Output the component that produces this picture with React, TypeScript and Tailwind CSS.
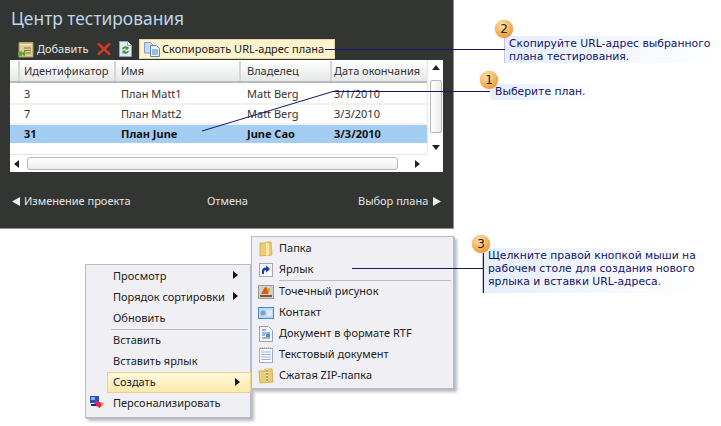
import React from 'react';

const rows = [
  { id: '3', name: 'План Matt1', owner: 'Matt Berg', date: '3/1/2010' },
  { id: '7', name: 'План Matt2', owner: 'Matt Berg', date: '3/3/2010' },
  { id: '31', name: 'План June', owner: 'June Cao', date: '3/3/2010', selected: true },
];

function AddIcon() {
  return (
    <svg width="17" height="17" viewBox="0 0 17 17">
      <rect x="2" y="2" width="14" height="14" fill="#e3cf96" stroke="#a8935a" />
      <path d="M3 2v-1M5 2v-1M7 2v-1M9 2v-1M11 2v-1M13 2v-1M15 2v-1" stroke="#f0e6c0" />
      <path d="M3 3h12v1H3z" fill="#f3eccf" />
      <path d="M7 7h7M7 9.500h7M7 12h7" stroke="#7c7350" />
      <path d="M1 11l4-1v2l3-2.500v6l-3-2v2l-4-1z" fill="#5fa33f" />
    </svg>
  );
}

function DeleteIcon() {
  return (
    <svg width="14" height="14" viewBox="0 0 14 14">
      <path d="M1 1.500l12 11M13 1.500l-12 11" stroke="#d9391e" strokeWidth="2.400" />
    </svg>
  );
}

function RefreshIcon() {
  return (
    <svg width="13" height="16" viewBox="0 0 13 16">
      <path d="M.5.500h8l4 4v11H.5z" fill="#dfe9f8" stroke="#8fa6c4" />
      <path d="M8.500.500v4h4" fill="#f6f9fe" stroke="#8fa6c4" />
      <path d="M3 8a3.500 3.500 0 0 1 5.500-2l1-1v3.500H6l1-1A2 2 0 0 0 4.500 8.500zM10 10a3.500 3.500 0 0 1-5.500 2l-1 1V9.500H7l-1 1a2 2 0 0 0 2.500-.500z" fill="#3f9a2e" />
    </svg>
  );
}

function CopyIcon() {
  return (
    <svg width="16" height="15" viewBox="0 0 16 15">
      <path d="M.5.500h6l2.500 2.500v8H.5z" fill="#c9daf3" stroke="#7f9cc7" />
      <path d="M6.500 3.500h6l3 3v8h-9z" fill="#eef4fd" stroke="#5f86bf" />
      <path d="M8 8h6M8 10h6M8 12h6" stroke="#4f7fc4" />
    </svg>
  );
}

function Arrow({ dir, className }: { dir: 'left' | 'right' | 'up' | 'down'; className: string }) {
  const d = { left: 'M6 0v8L1 4z', right: 'M1 0v8l5-4z', up: 'M0 6h8L4 1z', down: 'M0 2h8L4 7z' }[dir];
  return (
    <svg width="8" height="8" viewBox="0 0 8 8" className={`shrink-0 ${className}`}>
      <path d={d} fill="currentColor" />
    </svg>
  );
}

function FooterArrow({ right }: { right?: boolean }) {
  return (
    <svg width="8" height="9" viewBox="0 0 8 9" className="shrink-0 text-[#f0f0f0]">
      <path d={right ? 'M0 0v9l8-4.500z' : 'M8 0v9L0 4.500z'} fill="currentColor" />
    </svg>
  );
}

function HeaderCell({ label, className }: { label: string; className: string }) {
  return (
    <div className={`flex h-full shrink-0 items-center border-l-2 border-[#d4d6d6] ${className}`}>
      <span className="whitespace-nowrap">{label}</span>
    </div>
  );
}

function PlanTable() {
  return (
    <div className="mx-[10px] mt-[1px] flex h-[112px] w-[433px] flex-col bg-white text-[11px] text-[#333]">
      <div className="flex min-h-0 flex-1">
        <div className="w-[417px] overflow-hidden">
          <div className="flex h-[23px] items-center border-b-2 border-[#b9bcbc] bg-gradient-to-b from-white to-[#e6e8e8] pt-[1px]">
            <HeaderCell label="Идентификатор" className="ml-[8px] w-[96px] pl-[4px]" />
            <HeaderCell label="Имя" className="w-[125px] pl-[5px]" />
            <HeaderCell label="Владелец" className="w-[91px] pl-[6px]" />
            <HeaderCell label="Дата окончания" className="w-[88px] pl-[2px]" />
          </div>
          <div className="pt-[2px]">
            {rows.map((r) => (
              <div
                key={r.id}
                className={`flex h-[20px] items-center border-b-2 pt-px ${
                  r.selected ? 'border-white bg-[#a4cdf4] font-bold text-[#111]' : 'border-[#f1f1f1]'
                }`}
              >
                <div className="w-[110px] pl-[14px]">{r.id}</div>
                <div className="w-[127px] pl-[1px]">{r.name}</div>
                <div className="w-[87px]">{r.owner}</div>
                <div>{r.date}</div>
              </div>
            ))}
          </div>
        </div>
        <div className="flex w-[16px] flex-col items-center border-l border-[#e8e8e8]">
          <Arrow dir="up" className="mt-[4px] text-[#222]" />
          <div className="mt-[8px] h-[53px] w-[12px] rounded-[2px] border border-[#b4b8b8] bg-gradient-to-r from-white to-[#ececec]" />
          <Arrow dir="down" className="mt-[10px] text-[#222]" />
        </div>
      </div>
      <div className="flex h-[18px] w-[417px] items-center border-t border-[#e4e4e4] pl-[3px]">
        <Arrow dir="left" className="text-[#222]" />
        <div className="ml-[6px] h-[13px] w-[371px] rounded-[3px] border border-[#b4b8b8] bg-gradient-to-b from-white to-[#ececec]" />
        <Arrow dir="right" className="ml-[16px] text-[#222]" />
      </div>
    </div>
  );
}

function TestPanel() {
  return (
    <div className="flex h-[229px] w-[454px] flex-col border-b border-r border-[#8d908d] bg-[#323532]">
      <h1 className="ml-[11px] mt-[6px] h-[24px] text-[17.4px] leading-[24px] font-normal text-[#bdd6e8]">
        Центр тестирования
      </h1>
      <div className="ml-[17px] mt-[9px] flex h-[20px] items-center text-[11px] text-[#e8e8e8]">
        <AddIcon />
        <span className="ml-[3px] w-[50px] whitespace-nowrap">Добавить</span>
        <span className="ml-[10px] flex"><DeleteIcon /></span>
        <span className="ml-[8px] flex"><RefreshIcon /></span>
        <div className="ml-[7px] flex h-[20px] w-[196px] items-center border border-[#e3d6a0] bg-[#fdf3cf] pl-[4px] text-[#222]">
          <CopyIcon />
          <span className="ml-[2px] whitespace-nowrap">Скопировать URL-адрес плана</span>
        </div>
      </div>
      <PlanTable />
      <div className="mt-[21px] flex items-center whitespace-nowrap px-[12px] text-[11px] text-[#e4e4e4]">
        <FooterArrow />
        <span className="ml-[4px] w-[183px] shrink-0">Изменение проекта</span>
        <span className="w-[151px] shrink-0">Отмена</span>
        <span className="w-[75px] shrink-0">Выбор плана</span>
        <FooterArrow right />
      </div>
    </div>
  );
}

function MenuRow({ label, sub, active, left }: { label: string; sub?: boolean; active?: boolean; left: string }) {
  return (
    <div
      className={`relative flex h-[21px] items-center whitespace-nowrap ${left} ${
        active ? 'border border-[#e5d28f] bg-gradient-to-b from-[#fdf7dc] to-[#fbe9ab]' : ''
      }`}
    >
      <span>{label}</span>
      {sub && <Arrow dir="right" className="absolute right-[8px] top-[5px] text-[#111]" />}
    </div>
  );
}

const PersonalizeIcon = (
  <svg width="14" height="13" viewBox="0 0 14 13" className="absolute left-[4px] top-[3px]">
    <rect x="0" y="0" width="9" height="7" fill="#2b4fb8" />
    <rect x="1" y="1" width="4" height="3" fill="#7fb2ee" />
    <path d="M5 5l8 2-3 5-6-3z" fill="#d8285a" />
    <path d="M11 6l3 1-2 4z" fill="#e8a020" />
    <path d="M1 8h5v2H1z" fill="#1b2b66" />
  </svg>
);

function ContextMenu() {
  return (
    <div className="absolute left-[85px] top-[264px] h-[154px] w-[166px] border border-[#b4bbca] bg-[#f0f0f4] pt-px text-[11px] text-[#222] shadow-[1px_1px_0_#b4bbca,3px_3px_3px_#bbb]">
      <MenuRow label="Просмотр" sub left="ml-[21px] pl-[6px] mr-[2px]" />
      <MenuRow label="Порядок сортировки" sub left="ml-[21px] pl-[6px] mr-[2px]" />
      <MenuRow label="Обновить" left="ml-[21px] pl-[6px] mr-[2px]" />
      <div className="ml-[25px] mr-[2px] border-t border-[#b9bcc4]" />
      <MenuRow label="Вставить" left="ml-[21px] pl-[6px] mr-[2px]" />
      <MenuRow label="Вставить ярлык" left="ml-[21px] pl-[6px] mr-[2px]" />
      <MenuRow label="Создать" sub active left="ml-[21px] pl-[5px] mr-[-1px]" />
      <div className="relative">
        {PersonalizeIcon}
        <MenuRow label="Персонализировать" left="ml-[21px] pl-[6px]" />
      </div>
    </div>
  );
}

function FileIcon({ kind }: { kind: string }) {
  const cls = 'mr-[5px] shrink-0';
  if (kind === 'folder')
    return (
      <svg width="16" height="16" viewBox="0 0 16 16" className={cls}>
        <path d="M2 2h5l1-1h5l1 13-12 1z" fill="#eccb72" stroke="#d6b155" />
        <path d="M8 1l3 2v11l-3 1z" fill="#f8e6a6" />
      </svg>
    );
  if (kind === 'shortcut')
    return (
      <svg width="16" height="16" viewBox="0 0 16 16" className={cls}>
        <rect x="1.500" y="1.500" width="13" height="13" fill="#f6f6f8" stroke="#a9a9b4" />
        <path d="M4 12V8.500C4 6.500 6 5.500 8 5.500V3.500l4 3.500-4 3.500V8c-1.500 0-2 1-2 2v2z" fill="#1f3f9a" />
      </svg>
    );
  if (kind === 'bitmap')
    return (
      <svg width="16" height="16" viewBox="0 0 16 16" className={cls}>
        <rect x=".5" y="1.500" width="15" height="13" fill="#cfcfcf" stroke="#9a9a9a" />
        <path d="M3 10l4-7 5 2-2 5z" fill="#d8591e" />
        <path d="M8 3l4 2-1 4z" fill="#e3b91f" />
        <path d="M2 11h12v2H2z" fill="#8a5230" />
      </svg>
    );
  if (kind === 'contact')
    return (
      <svg width="16" height="14" viewBox="0 0 16 14" className={cls}>
        <rect x=".5" y="1.500" width="15" height="11" fill="#bcd8f2" stroke="#4a8ac9" />
        <circle cx="5" cy="7" r="2.500" fill="#7ea3bd" />
        <path d="M9 5h5M9 7h5M9 9h5" stroke="#f4f9ff" />
      </svg>
    );
  if (kind === 'rtf')
    return (
      <svg width="14" height="16" viewBox="0 0 14 16" className="ml-[1px] mr-[6px] shrink-0">
        <path d="M.5.500h9l4 4v11H.5z" fill="#f6f8fb" stroke="#9aa0ad" />
        <path d="M3 4h4M3 7h8M3 9h3M3 12h8" stroke="#4a6fb0" />
        <rect x="7" y="8" width="4" height="3" fill="#4a8ac9" />
      </svg>
    );
  if (kind === 'text')
    return (
      <svg width="14" height="16" viewBox="0 0 14 16" className="ml-[1px] mr-[6px] shrink-0">
        <rect x=".5" y="1.500" width="13" height="14" fill="#f8fafd" stroke="#a7adbb" />
        <path d="M2 5h10M2 7.500h10M2 10h10M2 12.500h10" stroke="#9fb6d8" />
        <path d="M1 1h12" stroke="#8a8f9c" strokeDasharray="1 1" />
      </svg>
    );
  return (
    <svg width="16" height="16" viewBox="0 0 16 16" className={cls}>
      <path d="M1 3h5l1-2h7l1 13-13 1z" fill="#eccb72" stroke="#d6b155" />
      <path d="M8 1h2v13H8z" fill="#fff3c0" />
      <path d="M8 3h2M8 6h2M8 9h2M8 12h2" stroke="#4a4a4a" />
    </svg>
  );
}

const newItems = [
  { label: 'Точечный рисунок', kind: 'bitmap' },
  { label: 'Контакт', kind: 'contact' },
  { label: 'Документ в формате RTF', kind: 'rtf' },
  { label: 'Текстовый документ', kind: 'text' },
  { label: 'Сжатая ZIP-папка', kind: 'zip' },
];

function NewSubmenu() {
  return (
    <div className="absolute left-[251px] top-[236px] h-[153px] w-[203px] border border-[#b4bbca] bg-[#f0f0f4] pt-px text-[11px] text-[#222] shadow-[1px_1px_0_#b4bbca,3px_3px_3px_#bbb]">
      <div className="flex h-[21px] items-center pl-[6px]"><FileIcon kind="folder" /><span>Папка</span></div>
      <div className="flex h-[21px] items-center pl-[6px]"><FileIcon kind="shortcut" /><span>Ярлык</span></div>
      <div className="ml-[27px] mr-[2px] border-t border-[#b9bcc4]" />
      {newItems.map((it) => (
        <div key={it.label} className="flex h-[21px] items-center pl-[6px]">
          <FileIcon kind={it.kind} />
          <span className="whitespace-nowrap">{it.label}</span>
        </div>
      ))}
    </div>
  );
}

function Badge({ n, className }: { n: number; className: string }) {
  return (
    <div
      className={`absolute flex h-[18px] w-[18px] items-center justify-center rounded-full bg-[radial-gradient(circle_at_40%_30%,#fde2b0,#f5a94a_60%,#e0801e)] font-['DejaVu_Sans',sans-serif] text-[12px] leading-none text-[#222] shadow-[0_0_1px_#b06a1a] ${className}`}
    >
      {n}
    </div>
  );
}

function Callout({ className, lines }: { className: string; lines: string[] }) {
  return (
    <div className={`absolute bg-gradient-to-r from-[#e6eefc] to-white pl-[4px] font-['DejaVu_Sans',sans-serif] text-[10.8px] leading-[13px] text-[#14146b] ${className}`}>
      {lines.map((l) => (
        <div key={l} className="whitespace-nowrap">{l}</div>
      ))}
    </div>
  );
}

function Leaders() {
  return (
    <svg width="721" height="426" className="pointer-events-none absolute left-0 top-0">
      <g stroke="#15156e" fill="none">
        <path d="M325 49.500H505" />
        <path d="M505.500 37V63" strokeWidth="1.500" />
        <path d="M202 131L333 91.500H490" />
        <path d="M352 268.500H483" />
        <path d="M483.500 253V293" strokeWidth="1.500" />
      </g>
    </svg>
  );
}

export default function App() {
  return (
    <div className="relative h-[426px] w-[721px] overflow-hidden bg-white font-['Noto_Sans',sans-serif]">
      <TestPanel />
      <ContextMenu />
      <NewSubmenu />
      <Leaders />
      <Callout className="left-[505px] top-[36px] h-[27px] w-[216px] pt-px" lines={['Скопируйте URL-адрес выбранного', 'плана тестирования.']} />
      <Callout className="left-[491px] top-[84px] h-[16px] w-[105px] pt-px" lines={['Выберите план.']} />
      <Callout className="left-[484px] top-[248px] h-[45px] w-[218px] pt-px" lines={['Щелкните правой кнопкой мыши на', 'рабочем столе для создания нового', 'ярлыка и вставки URL-адреса.']} />
      <Badge n={2} className="left-[495px] top-[20px]" />
      <Badge n={1} className="left-[480px] top-[71px]" />
      <Badge n={3} className="left-[472px] top-[235px]" />
    </div>
  );
}
